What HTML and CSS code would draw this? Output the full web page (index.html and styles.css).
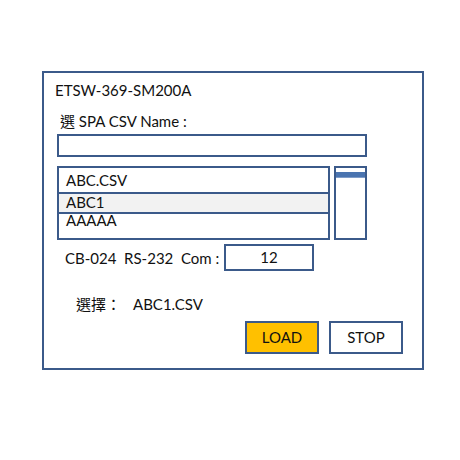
FILE: index.html
```html
<!DOCTYPE html>
<html lang="zh-Hant">
<head>
    <meta charset="UTF-8">
    <meta name="viewport" content="width=device-width, initial-scale=1.0">
    <title>ETSW-369-SM200A</title>
    <link rel="stylesheet" href="styles.css">
</head>
<body>
    <div class="frame">
        <div class="title">ETSW-369-SM200A</div>
        <div class="label"><span class="cjk">選</span> SPA CSV Name :</div>
        <div class="name-input"></div>

        <div class="list-row">
            <div class="file-list">
                <div class="file-item first">ABC.CSV</div>
                <div class="file-item selected">ABC1</div>
                <div class="file-item last">AAAAA</div>
            </div>
            <div class="scroll">
                <div class="scroll-thumb"></div>
            </div>
        </div>

        <div class="com-row">
            <span class="com-label">CB-024&nbsp; RS-232&nbsp; Com :</span>
            <div class="com-box">12</div>
        </div>

        <div class="chosen"><span class="cjk">選擇：</span><span class="chosen-file">ABC1.CSV</span></div>

        <div class="buttons">
            <div class="btn load">LOAD</div>
            <div class="btn stop">STOP</div>
        </div>
    </div>
</body>
</html>
```

FILE: styles.css
```css
body {
    margin: 0;
    font-family: "Lato", "Liberation Sans", "Noto Sans CJK TC", sans-serif;
    color: #111;
    background: white;
}
.cjk {
    font-family: "Noto Sans CJK TC", sans-serif;
}

.frame {
    box-sizing: border-box;
    width: 382px;
    height: 299px;
    margin: 71px 0 0 42px;
    border: 2px solid #3b5a8a;
    padding: 0 0 0 13px;
    display: flex;
    flex-direction: column;
}
.title {
    font-size: 15px;
    line-height: 20px;
    margin: 7px 0 0 -2px;
}
.label {
    font-size: 15px;
    line-height: 20px;
    margin: 11px 0 0 3px;
}
.name-input {
    box-sizing: border-box;
    width: 310px;
    height: 23px;
    margin-top: 3px;
    border: 2px solid #3b5a8a;
}

.list-row {
    display: flex;
    gap: 4px;
    margin-top: 9px;
    height: 74px;
}
.file-list {
    box-sizing: border-box;
    width: 273px;
    border: 2px solid #3b5a8a;
    display: flex;
    flex-direction: column;
}
.file-item {
    font-size: 15px;
    padding-left: 7px;
    height: 18px;
    line-height: 17px;
    border-top: 2px solid #3b5a8a;
}
.file-item.first {
    border-top: none;
    height: 24px;
    line-height: 24px;
}
.file-item.selected {
    background: #f2f2f2;
}
.file-item.last {
    flex: 1;
    line-height: 13px;
}
.scroll {
    box-sizing: border-box;
    width: 33px;
    border: 2px solid #3b5a8a;
    padding-top: 4px;
}
.scroll-thumb {
    height: 5px;
    background: #4a74b0;
    border-bottom: 1px solid #7f9cc8;
}

.com-row {
    display: flex;
    align-items: center;
    margin-top: 4px;
    height: 27px;
}
.com-label {
    font-size: 15px;
    margin-left: 8px;
    width: 159px;
}
.com-box {
    box-sizing: border-box;
    width: 90px;
    height: 27px;
    border: 2px solid #3b5a8a;
    font-size: 15px;
    line-height: 23px;
    text-align: center;
}

.chosen {
    font-size: 15px;
    line-height: 20px;
    margin: 23px 0 0 19px;
}
.chosen-file {
    margin-left: 12px;
}

.buttons {
    display: flex;
    gap: 10px;
    margin: 7px 0 0 188px;
}
.btn {
    box-sizing: border-box;
    width: 74px;
    height: 33px;
    border: 2px solid #3b5a8a;
    font-size: 15px;
    line-height: 29px;
    text-align: center;
}
.btn.load {
    background: #ffc000;
}
.btn.stop {
    background: white;
}
```
